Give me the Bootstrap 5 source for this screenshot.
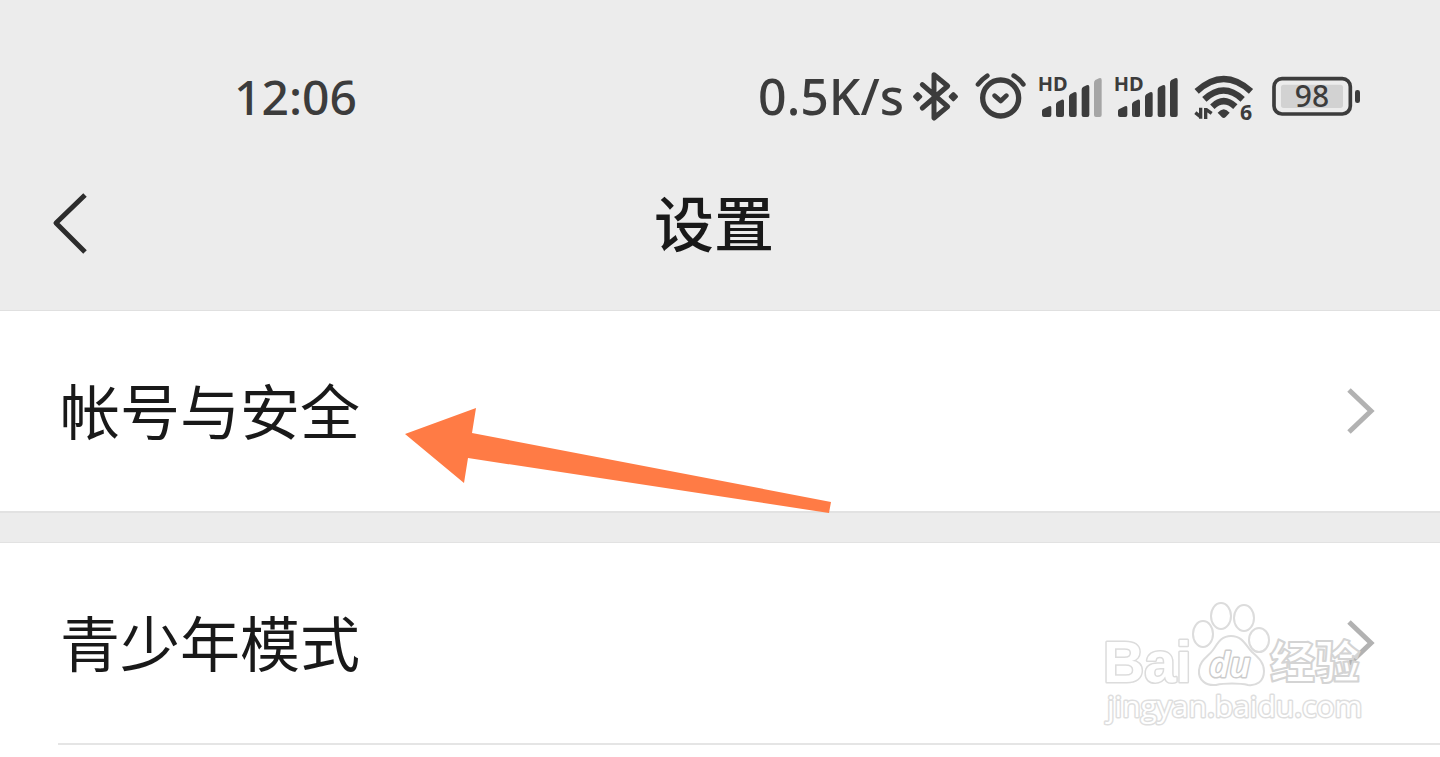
<!DOCTYPE html>
<html lang="zh-CN">
<head>
<meta charset="utf-8">
<meta name="viewport" content="width=device-width, initial-scale=1">
<title>设置</title>
<link href="https://cdn.jsdelivr.net/npm/bootstrap@5.3.0/dist/css/bootstrap.min.css" rel="stylesheet">
<style>
  body { font-family: "Noto Sans", "Noto Sans CJK SC", sans-serif; color: #191919; background: #fff; }
  .top-area { background: #ececec; border-bottom: 1px solid #e0e0e0; }
  .status-bar { padding: 68px 74px 0 234px; color: #3c3c3c; font-size: 50px; font-weight: 500; line-height: 56px; }
  .clock { font-size: 48px; padding-top: 2px; line-height: 54px; }
  .status-bar svg { height: 52px; flex: none; display: block; overflow: visible; }
  .title-bar { height: 186px; padding: 8px 12px 0 0; }
  .title-bar h1 { font-size: 60px; line-height: 80px; font-weight: 500; font-family: "Noto Sans CJK SC", sans-serif; }
  .back-btn { left: 48px; top: 50%; margin-top: -32px; line-height: 0; }
  .setting-row { height: 200px; padding: 0 64px 0 60px; font-size: 60px; line-height: 80px; color: #191919; font-family: "Noto Sans CJK SC", sans-serif; }
  .row-label { padding-bottom: 4px; }
  .row-gap { height: 32px; background: #ececec; border-top: 2px solid #e2e2e2; border-bottom: 1px solid #e2e2e2; }
  .row-divider { margin-left: 58px; border-top: 2px solid #e5e5e5; }
  .pointer-arrow { left: 400px; top: 92px; pointer-events: none; }
  .watermark { right: 70px; top: 52px; pointer-events: none; }
</style>
</head>
<body>
<header class="top-area">
  <div class="status-bar d-flex align-items-center justify-content-between">
    <span class="clock">12:06</span>
    <div class="d-flex align-items-center">
      <span class="speed pe-1">0.5K/s</span>
      <svg width="60" viewBox="504 30 180 156" fill="none" stroke="#3c3c3c" stroke-width="15" stroke-linecap="round" stroke-linejoin="round" aria-label="蓝牙"><path d="M547 74L623 140L582 174V44L623 78L547 144"/><path d="M533 101L542 110L533 119L524 110ZM640 101L649 110L640 119L631 110Z" fill="#3c3c3c" stroke-width="10"/></svg>
      <svg width="64" viewBox="684 30 192 156" fill="none" stroke="#3c3c3c" stroke-width="16" stroke-linecap="round" stroke-linejoin="round" aria-label="闹钟"><circle cx="782" cy="114" r="54"/><path d="M764 107L782 123L799 107M714 73Q725 58 742 47M821 47Q838 56 850 73" stroke-width="14"/></svg>
      <svg width="76" viewBox="36 30 228 156" fill="#3c3c3c" aria-label="信号"><g id="bars"><text x="53" y="94" font-size="60" font-weight="700">HD</text><path d="M66 153Q66 149 70 147L87 139Q94 136 94 143V165Q94 171 88 171H72Q66 171 66 165ZM108 133Q108 128 113 125L125 119Q132 116 132 124V165Q132 171 126 171H114Q108 171 108 165ZM147 111Q147 106 151 103L162 97Q170 94 170 102V165Q170 171 164 171H153Q147 171 147 165ZM185 89Q185 84 189 81L200 76Q208 73 208 81V165Q208 171 202 171H191Q185 171 185 165Z"/></g><path fill="#a5a5a5" d="M222 68Q222 63 226 60L237 55Q245 52 245 60V165Q245 171 239 171H228Q222 171 222 165Z"/></svg>
      <svg width="76" viewBox="36 30 228 156" fill="#3c3c3c" aria-label="信号"><use href="#bars"/><path d="M222 68Q222 63 226 60L237 55Q245 52 245 60V165Q245 171 239 171H228Q222 171 222 165Z"/></svg>
      <svg width="78" viewBox="492 30 234 156" fill="none" stroke="#3c3c3c" stroke-width="19" aria-label="无线网络"><path d="M530 94Q611 20 693 94M553 118Q611 65 668 118M577 140Q611 107 646 140"/><path d="M593 158Q611 137 629 158L617 171Q611 177 605 171Z" fill="#3c3c3c" stroke="none"/><path d="M542 143V176M526 158L540 169M557 177V144M559 149L575 160" stroke-width="10"/><text x="660" y="181" font-size="64" font-weight="700" fill="#3c3c3c" stroke="none">6</text></svg>
      <svg width="104" viewBox="726 30 312 156" fill="none" aria-label="电量"><rect x="762" y="56" width="229" height="106" rx="24" stroke="#3c3c3c" stroke-width="11"/><rect x="783" y="74" width="186" height="70" rx="8" fill="#d2d2d2"/><rect x="1005" y="90" width="15" height="39" rx="7" fill="#3c3c3c"/><text x="876" y="142" text-anchor="middle" font-size="90" font-weight="500" fill="#3c3c3c">98</text></svg>
    </div>
  </div>
  <div class="title-bar position-relative d-flex align-items-center justify-content-center">
    <button type="button" class="back-btn btn border-0 p-0 position-absolute" aria-label="返回"><svg width="44" height="76" viewBox="0 0 44 76" fill="none" stroke="#2c2c2c" stroke-width="5" stroke-linejoin="round"><path d="M37 10L8 38L37 67"/></svg></button>
    <h1 class="m-0">设置</h1>
  </div>
</header>
<main>
  <div class="position-relative">
    <a href="#account" class="setting-row d-flex align-items-center justify-content-between text-decoration-none"><span class="row-label">帐号与安全</span>
      <svg width="30" height="52" viewBox="0 0 30 52" fill="none" stroke="#b2b2b2" stroke-width="5"><path d="M3 5L25 26L3 47"/></svg></a>
    <svg class="pointer-arrow position-absolute" width="440" height="112" viewBox="400 403 440 112" fill="#ff7b45" aria-hidden="true"><path d="M405 434L476 408L472 433L831 502L829 513L468 458L464 483Z"/></svg>
  </div>
  <div class="row-gap"></div>
  <div class="position-relative">
    <a href="#youth" class="setting-row d-flex align-items-center justify-content-between text-decoration-none"><span class="row-label">青少年模式</span>
      <svg width="30" height="52" viewBox="0 0 30 52" fill="none" stroke="#b2b2b2" stroke-width="5"><path d="M3 5L25 26L3 47"/></svg></a>
    <svg class="watermark position-absolute" width="280" height="140" viewBox="1090 595 280 140" fill="#fff" stroke="#dcdcdc" stroke-width="2" stroke-linejoin="round">
      <text x="1103" y="682" font-size="57" font-family="Liberation Sans" font-weight="700" paint-order="stroke" stroke-width="3">Bai</text>
      <g stroke-width="2"><ellipse cx="1203" cy="634" rx="10" ry="13"/><ellipse cx="1221" cy="616" rx="10" ry="13"/><ellipse cx="1244" cy="618" rx="10" ry="13"/><ellipse cx="1259" cy="640" rx="10" ry="12"/>
      <path d="M1231 636C1243 636 1246 646 1252 652C1259 658 1264 663 1264 671C1264 682 1256 686 1248 685C1240 683 1224 683 1216 685C1206 686 1198 680 1199 670C1200 660 1208 657 1213 650C1218 643 1221 636 1231 636Z"/></g>
      <text x="1209" y="677" font-size="35" font-family="Noto Sans" font-style="italic" font-weight="600" paint-order="stroke" stroke="#cccccc" stroke-width="3">du</text>
      <text x="1270" y="679" font-size="45" font-family="Noto Sans CJK SC" font-weight="900" fill-opacity=".5" stroke="#d4d4d4" stroke-width="2">经验</text>
      <text x="1107" y="717" font-size="30" font-family="Open Sans" paint-order="stroke" stroke="#dedede" stroke-width="3">jingyan.baidu.com</text>
    </svg>
  </div>
  <div class="row-divider"></div>
</main>
<script src="https://cdn.jsdelivr.net/npm/bootstrap@5.3.0/dist/js/bootstrap.bundle.min.js"></script>
</body>
</html>
